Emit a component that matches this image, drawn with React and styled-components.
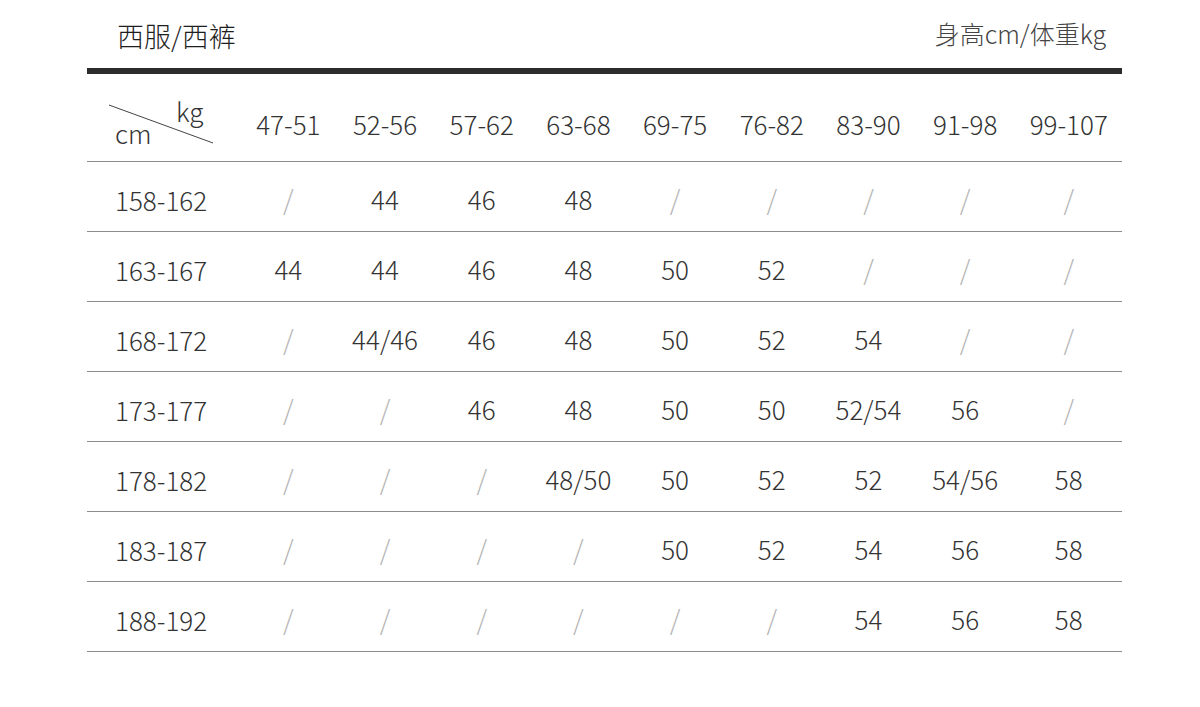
import React from "react";
import styled, { createGlobalStyle } from "styled-components";

const GlobalStyle = createGlobalStyle`
  html, body {
    margin: 0;
    padding: 0;
    background: #ffffff;
  }
  body {
    font-family: "Noto Sans CJK SC", "Noto Sans", sans-serif;
    color: #333;
  }
`;

const StyledPage = styled.div`
  width: 1200px;
  height: 707px;
  padding: 0 78px 0 87px;
  box-sizing: border-box;
  overflow: hidden;
`;

const StyledTitleBar = styled.div`
  display: flex;
  justify-content: space-between;
  align-items: flex-end;
  height: 74px;
  padding: 0 16px 0 30px;
  box-sizing: border-box;
  border-bottom: 6px solid #2c2c2c;
`;

const StyledTitle = styled.h1`
  margin: 0 0 19px;
  font-size: 27px;
  font-weight: 300;
  color: #1e1e1e;
  line-height: 1;
`;

const StyledUnits = styled.span`
  margin-bottom: 22px;
  font-size: 25px;
  font-weight: 300;
  color: #444;
  line-height: 1;
`;

const StyledRow = styled.div`
  display: grid;
  grid-template-columns: 153px repeat(8, 96.7px) 1fr;
  align-items: center;
  height: ${(p) => (p.$head ? "88px" : "70px")};
  border-bottom: 1px solid #8c8c8c;
  box-sizing: border-box;
`;

const StyledLabel = styled.div`
  padding: 6px 0 0 28px;
  font-size: 26px;
  font-weight: 300;
  color: #333;
`;

const StyledCell = styled.div`
  text-align: center;
  padding-top: ${(p) => (p.$head ? "12px" : "3px")};
  padding-left: ${(p) => (p.$last ? "2px" : "0")};
  font-size: 26px;
  font-weight: 300;
  color: ${(p) => (p.$empty ? "#b4b4b4" : "#333")};
  ${(p) => p.$empty && "font-weight: 200; font-size: 27px;"}
`;

const StyledCorner = styled.div`
  position: relative;
  height: 100%;
`;

const StyledCornerText = styled.span`
  position: absolute;
  font-size: 26px;
  font-weight: 300;
  color: #333;
  line-height: 1;
  left: ${(p) => p.$left}px;
  top: ${(p) => p.$top}px;
`;

const weights = [
  "47-51",
  "52-56",
  "57-62",
  "63-68",
  "69-75",
  "76-82",
  "83-90",
  "91-98",
  "99-107",
];

const rows = [
  ["158-162", ["/", "44", "46", "48", "/", "/", "/", "/", "/"]],
  ["163-167", ["44", "44", "46", "48", "50", "52", "/", "/", "/"]],
  ["168-172", ["/", "44/46", "46", "48", "50", "52", "54", "/", "/"]],
  ["173-177", ["/", "/", "46", "48", "50", "50", "52/54", "56", "/"]],
  ["178-182", ["/", "/", "/", "48/50", "50", "52", "52", "54/56", "58"]],
  ["183-187", ["/", "/", "/", "/", "50", "52", "54", "56", "58"]],
  ["188-192", ["/", "/", "/", "/", "/", "/", "54", "56", "58"]],
];

const App = () => {
  return (
    <StyledPage>
      <GlobalStyle />
      <StyledTitleBar>
        <StyledTitle>西服/西裤</StyledTitle>
        <StyledUnits>身高cm/体重kg</StyledUnits>
      </StyledTitleBar>

      <StyledRow $head>
        <StyledCorner>
          {/* diagonal divider of the corner cell */}
          <svg
            width="140"
            height="88"
            style={{ position: "absolute", left: 0, top: 0 }}
          >
            <line x1="22" y1="31" x2="126" y2="69" stroke="#444" strokeWidth="1" />
          </svg>
          <StyledCornerText $left={89} $top={24}>
            kg
          </StyledCornerText>
          <StyledCornerText $left={28} $top={46}>
            cm
          </StyledCornerText>
        </StyledCorner>
        {weights.map((w, i) => (
          <StyledCell $head $last={i === 8} key={w}>
            {w}
          </StyledCell>
        ))}
      </StyledRow>

      {rows.map(([height, sizes]) => (
        <StyledRow key={height}>
          <StyledLabel>{height}</StyledLabel>
          {sizes.map((s, i) => (
            <StyledCell key={i} $last={i === 8} $empty={s === "/"}>
              {s}
            </StyledCell>
          ))}
        </StyledRow>
      ))}
    </StyledPage>
  );
};

export default App;
